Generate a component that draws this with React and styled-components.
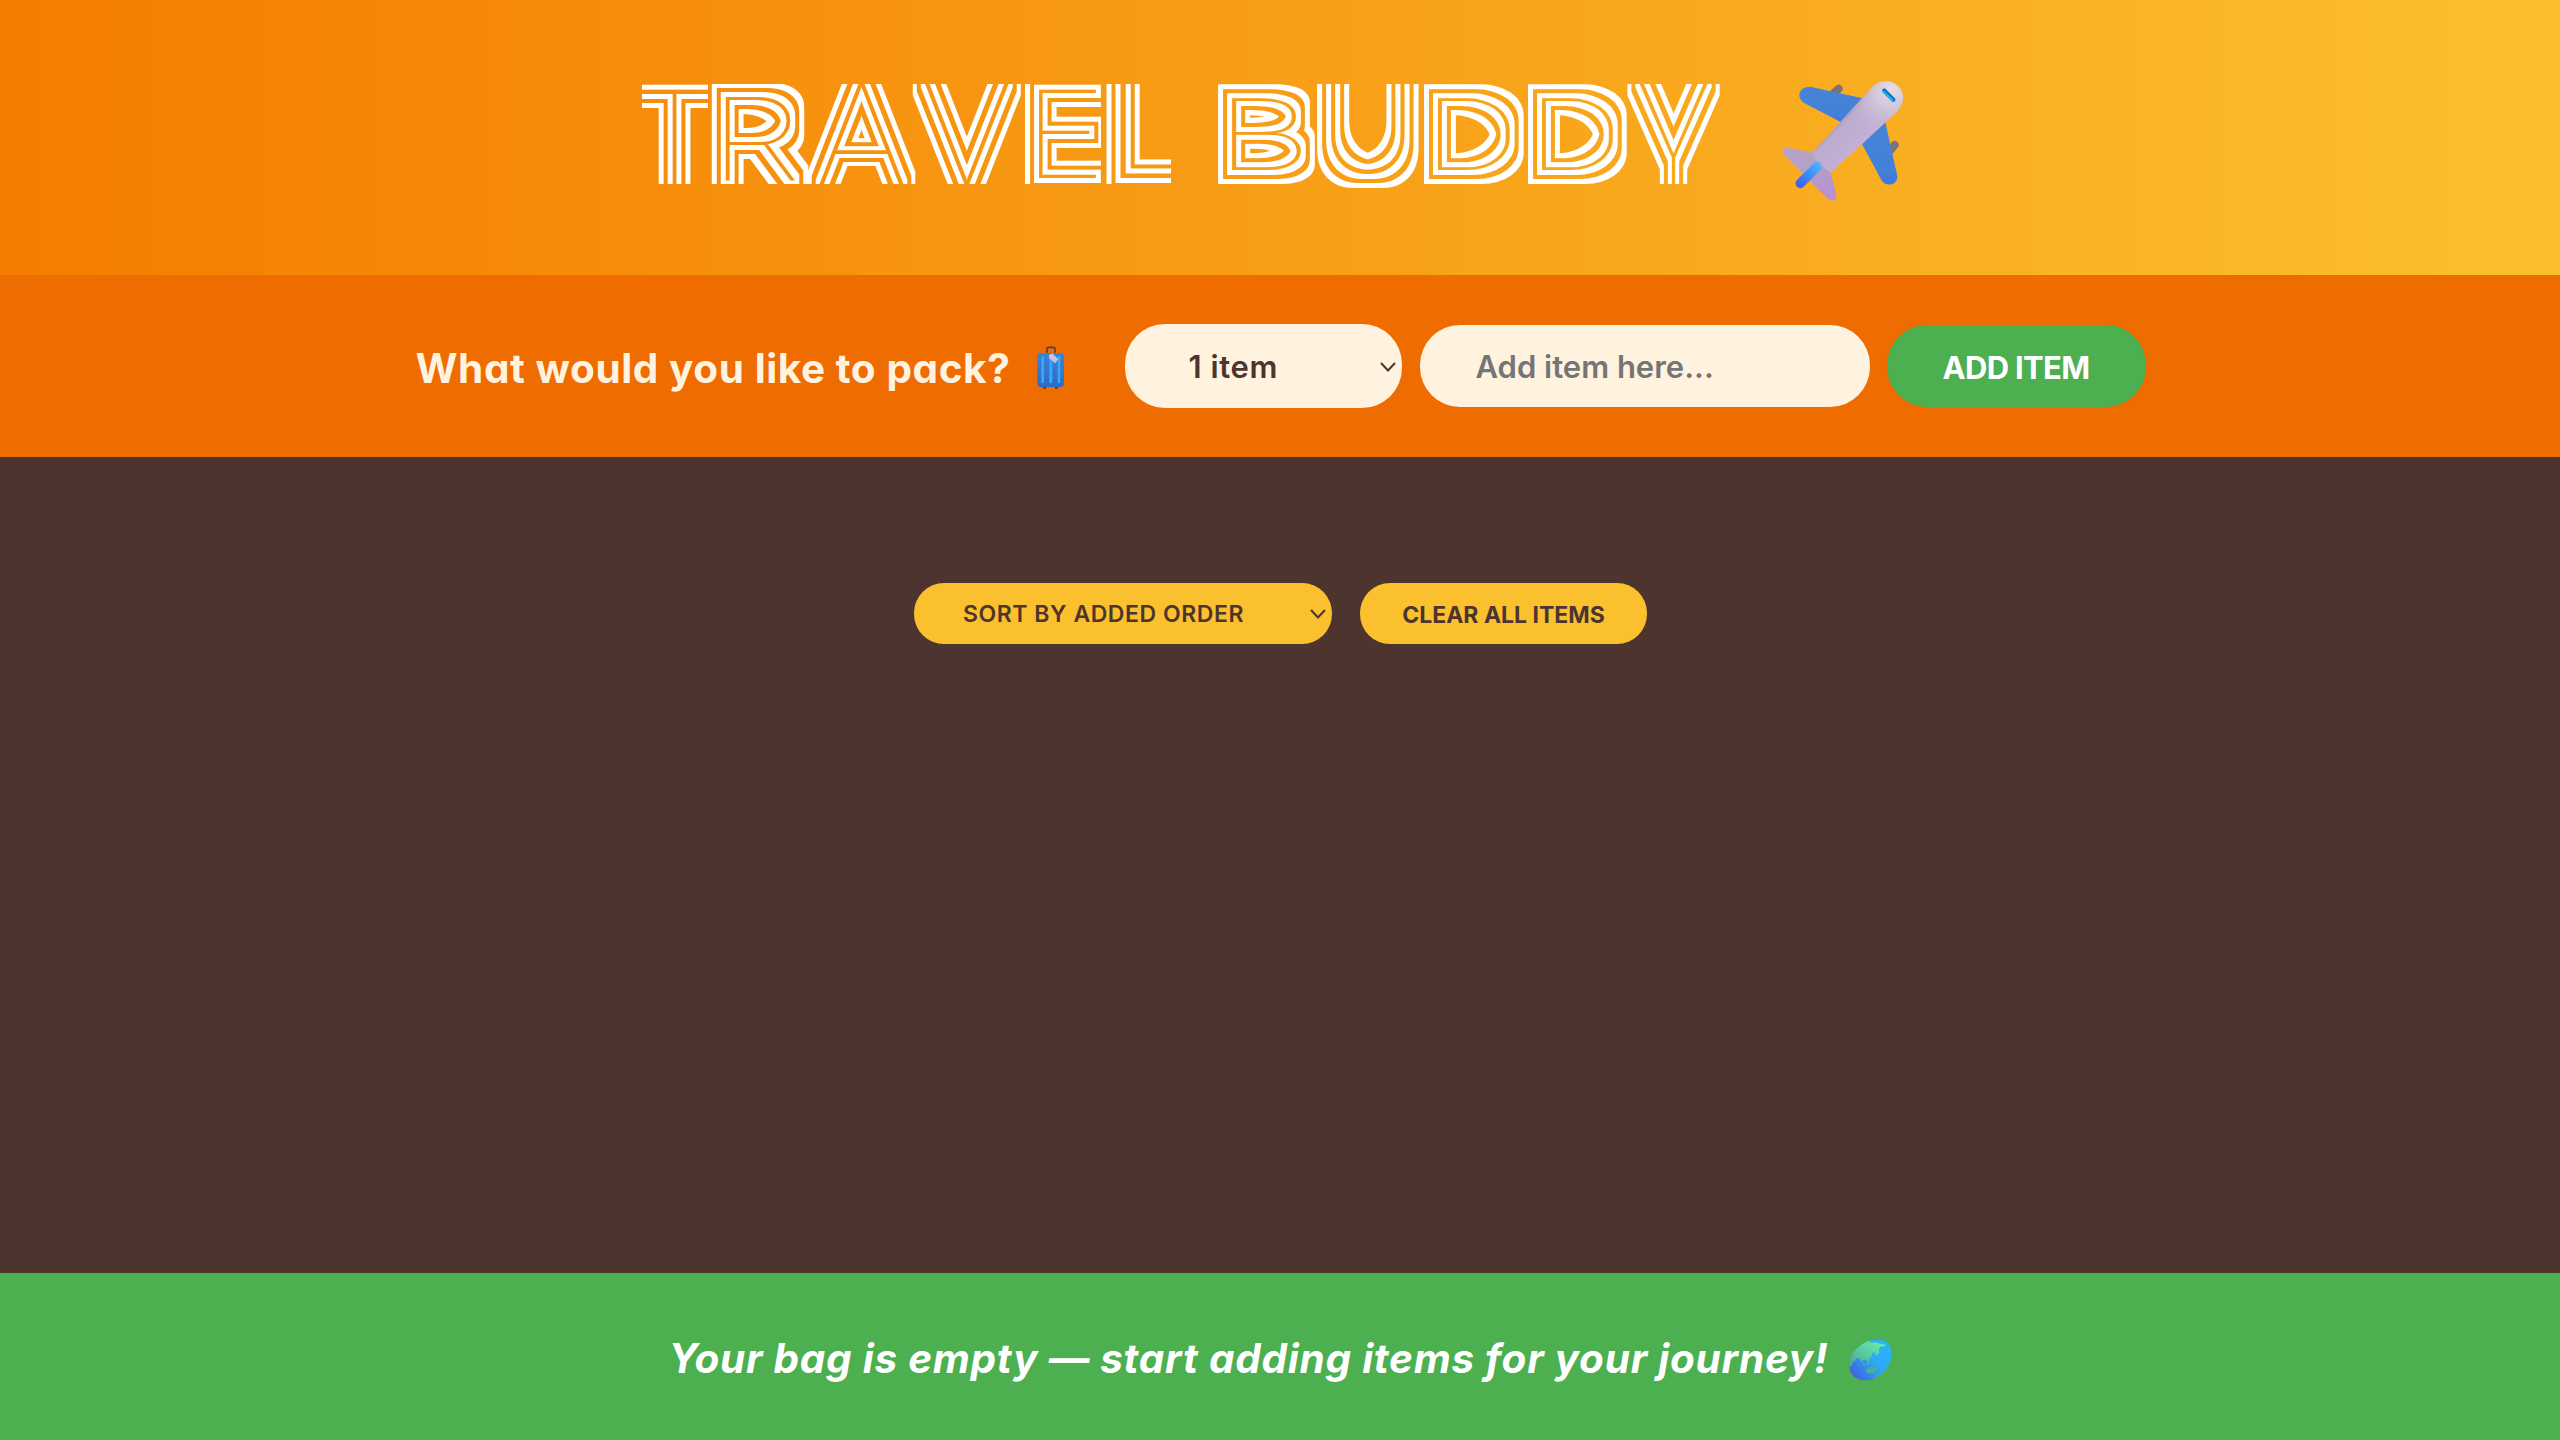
import React, { useMemo } from "react";
import styled, { createGlobalStyle } from "styled-components";

const GlobalStyle = createGlobalStyle`
  * { box-sizing: border-box; margin: 0; padding: 0; }
  body { margin: 0; overflow: hidden; }
`;

const FONT = `Inter, "Noto Sans", sans-serif`;

const Page = styled.div`
  width: 100%;
  height: 100vh;
  display: grid;
  grid-template-rows: 275px 182px 1fr 167px;
  font-family: ${FONT};
  font-feature-settings: "cv11", "ss03";
  font-weight: 700;
  color: #4e342e;
`;

const Header = styled.header`
  display: flex;
  justify-content: center;
  align-items: flex-start;
  padding: 80px 14px 0 0;
  background: linear-gradient(to right, #f57c00, #fbc02d);
`;

const Wordmark = styled.h1`
  height: 105px;
  padding-top: 4px;
  font: 100 100px/100px Roboto, sans-serif;
  color: #fff;
  white-space: pre;
`;

const Cell = styled.span`
  display: inline-block;
  vertical-align: top;
  width: ${(p) => p.$w}px;
  height: 100px;
  margin-left: ${(p) => p.$gap}px;
  filter: url(#${(p) => p.$filter});
  clip-path: inset(0 ${(p) => p.$side}px ${(p) => p.$bottom}px ${(p) => p.$side}px);
`;

const Glyph = styled.span`
  display: inline-block;
  vertical-align: top;
  transform-origin: 0 0;
  line-height: 100px;
`;

const Defs = styled.svg`
  position: absolute;
  width: 0;
  height: 0;
`;

const PlaneIcon = styled.svg`
  width: 122px;
  height: 122px;
  margin-left: 62px;
`;

/* l/r: outer edges of each letter; ink: box of the letter's centre line [x0, y0, x1, y1] */
const LETTERS = [
  { c: "T", l: 642, r: 708, ink: [636, 5, 713.4, 120], side: 0 },
  { c: "R", l: 711, r: 807, ink: [725, 14, 795, 98] },
  { c: "A", l: 806, r: 918, ink: [818.5, -1, 905, 102], thin: true },
  { c: "V", l: 911, r: 1023, ink: [923.5, -2, 1010.5, 101], thin: true },
  { c: "E", l: 1024, r: 1101, ink: [1038, 5, 1097, 95], side: 0 },
  { c: "L", l: 1105, r: 1171, ink: [1119, -30, 1195, 95], side: 0 },
  { c: " ", l: 1171, r: 1217 },
  { c: "B", l: 1217, r: 1315, ink: [1231, 14, 1301, 86] },
  { c: "U", l: 1317, r: 1419, ink: [1331, -30, 1405, 90.5], bottom: -8 },
  { c: "D", l: 1423, r: 1524, ink: [1437, 14, 1510, 86] },
  { c: "D", l: 1527, r: 1627, ink: [1541, 14, 1613, 86] },
  { c: "Y", l: 1626, r: 1720, ink: [1638.5, -2, 1708, 120], thin: true },
];

function fitLetters() {
  const ctx = document.createElement("canvas").getContext("2d");
  ctx.font = "100 100px Roboto, sans-serif";
  return LETTERS.map((d) => {
    if (!d.ink) return d;
    const m = ctx.measureText(d.c);
    const inkL = -m.actualBoundingBoxLeft;
    const inkW = m.actualBoundingBoxRight - inkL;
    const inkH = m.actualBoundingBoxAscent + m.actualBoundingBoxDescent;
    const base = 50 + (m.fontBoundingBoxAscent - m.fontBoundingBoxDescent) / 2;
    const [x0, y0, x1, y1] = d.ink;
    const sx = (x1 - x0) / inkW;
    const sy = (y1 - y0) / inkH;
    const tx = x0 - d.l - inkL * sx;
    const ty = y0 - (base - m.actualBoundingBoxAscent) * sy;
    return { ...d, transform: `translate(${tx}px, ${ty}px) scale(${sx}, ${sy})` };
  });
}

function LineFilter({ id, radii }) {
  const [a, b, c] = radii;
  return (
    <filter id={id} filterUnits="userSpaceOnUse" x="-60" y="-60" width="260" height="240" colorInterpolationFilters="sRGB">
      <feMorphology in="SourceGraphic" operator="dilate" radius={a} result="a" />
      <feMorphology in="SourceGraphic" operator="dilate" radius={b} result="b" />
      <feMorphology in="SourceGraphic" operator="dilate" radius={c} result="c" />
      <feComposite in="c" in2="b" operator="out" result="outer" />
      <feComposite in="a" in2="SourceGraphic" operator="out" result="inner" />
      <feMerge>
        <feMergeNode in="outer" />
        <feMergeNode in="inner" />
      </feMerge>
    </filter>
  );
}

function Title() {
  const letters = useMemo(fitLetters, []);
  return (
    <Wordmark aria-label="TRAVEL BUDDY">
      {letters.map((d, i) => (
        <Cell
          key={i}
          $w={d.r - d.l}
          $gap={i ? d.l - letters[i - 1].r : 0}
          $filter={d.thin ? "lines-diagonal" : "lines"}
          $side={d.side === 0 ? 0 : -10}
          $bottom={d.bottom || 0}
        >
          <Glyph style={{ transform: d.transform }}>{d.c}</Glyph>
        </Cell>
      ))}
    </Wordmark>
  );
}

function Plane() {
  return (
    <PlaneIcon viewBox="68 58 366 366">
      <defs>
        <linearGradient id="pBody" gradientUnits="userSpaceOnUse" x1="225" y1="175" x2="300" y2="250">
          <stop offset="0" stopColor="#9a8ba8" />
          <stop offset=".3" stopColor="#bcabcf" />
          <stop offset="1" stopColor="#c2b0d6" />
        </linearGradient>
        <radialGradient id="pNose" gradientUnits="userSpaceOnUse" cx="395" cy="85" r="150">
          <stop offset="0" stopColor="#e6dfe6" />
          <stop offset=".4" stopColor="#d4c8d8" stopOpacity=".85" />
          <stop offset="1" stopColor="#c2b0d0" stopOpacity="0" />
        </radialGradient>
        <linearGradient id="pFin" gradientUnits="userSpaceOnUse" x1="178" y1="312" x2="118" y2="374">
          <stop offset="0" stopColor="#4cb4ff" />
          <stop offset=".5" stopColor="#3c8cf8" />
          <stop offset="1" stopColor="#4060f0" />
        </linearGradient>
        <linearGradient id="pTail" x1="0" y1="0" x2=".6" y2="1">
          <stop offset="0" stopColor="#b9a3c6" />
          <stop offset=".5" stopColor="#b3a2c6" />
          <stop offset="1" stopColor="#b892d0" />
        </linearGradient>
        <linearGradient id="pWing" x1="0" y1="0" x2="0" y2="1">
          <stop offset="0" stopColor="#4683d8" />
          <stop offset=".8" stopColor="#4381da" />
          <stop offset="1" stopColor="#3f74dc" />
        </linearGradient>
      </defs>
      <path d="M224 96 L238 84" stroke="#7b7377" strokeWidth="24" strokeLinecap="round" />
      <path d="M394 268 L406 253" stroke="#7b7377" strokeWidth="24" strokeLinecap="round" />
      <path d="M152 78 L310 113 L244 184 L133 126 Q119 117 120 100 Q124 79 152 78Z" fill="url(#pWing)" />
      <path d="M378 184 L414 346 Q415 366 396 371 Q377 375 366 358 L308 250Z" fill="url(#pWing)" />
      <path d="M88 261 L160 276 L214 336 L231 402 Q232 418 218 420 Q209 420 202 411 L73 281 Q66 274 72 265 Q78 259 88 261Z" fill="url(#pTail)" />
      <path d="M342 75 Q370 54 402 66 Q426 78 431 104 Q433 130 412 154 L214 336 Q180 316 157 278Z" fill="url(#pBody)" />
      <path d="M342 75 Q370 54 402 66 Q426 78 431 104 Q433 130 412 154 L214 336 Q180 316 157 278Z" fill="url(#pNose)" />
      <path d="M123 368 L173 318" stroke="url(#pFin)" strokeWidth="29" strokeLinecap="round" />
      <path d="M375 90 L402 117" stroke="#0f77c0" strokeWidth="13" strokeLinecap="round" />
      <path d="M373 94 L399 119" stroke="#19b2f8" strokeWidth="7" strokeLinecap="round" />
    </PlaneIcon>
  );
}

const FormBar = styled.form`
  display: flex;
  justify-content: center;
  align-items: center;
  padding-left: 1px;
  background: #ef6c00;
`;

const Prompt = styled.h3`
  width: 595px;
  font-size: 40.5px;
  font-weight: 650;
  letter-spacing: ${(p) => p.$track}px;
  line-height: 52px;
  white-space: nowrap;
  color: #fff3e0;
  padding-top: 5px;
`;

const BagIcon = styled.svg`
  width: 28px;
  height: 44px;
  margin: 3px 60px 0 26px;
`;

const SelectBox = styled.div`
  position: relative;
  display: flex;
  width: ${(p) => p.$w}px;
  height: ${(p) => p.$h}px;
  margin-right: ${(p) => p.$mr}px;
`;

const Select = styled.select`
  appearance: none;
  width: 100%;
  border: 0;
  outline: 0;
  border-radius: ${(p) => p.$radius}px;
  background: ${(p) => p.$bg};
  color: #4e342e;
  padding: 1px 0 0 ${(p) => p.$pl}px;
  font: 600 ${(p) => p.$size}px ${FONT};
  font-feature-settings: "cv11";
  letter-spacing: ${(p) => p.$track}px;
`;

const Chevron = styled.svg`
  position: absolute;
  right: ${(p) => p.$right}px;
  top: ${(p) => p.$top}px;
  width: 16px;
  height: 10px;
  fill: none;
  stroke: #4e342e;
  stroke-width: 2;
  pointer-events: none;
`;

const Input = styled.input`
  width: 450px;
  height: 82px;
  margin-right: 17px;
  padding: 1px 0 0 56px;
  border: 0;
  outline: 0;
  border-radius: 40px;
  background: #fff3e0;
  font: 600 31px ${FONT};
  letter-spacing: 0;
  color: #4e342e;
  &::placeholder { color: #757575; opacity: 1; }
`;

const Button = styled.button`
  width: ${(p) => p.$w}px;
  height: ${(p) => p.$h}px;
  padding-top: 2px;
  border: 0;
  border-radius: ${(p) => p.$radius}px;
  background: ${(p) => p.$bg};
  color: ${(p) => p.$color};
  font: 650 ${(p) => p.$size}px ${FONT};
  letter-spacing: ${(p) => p.$track}px;
  white-space: nowrap;
`;

function Suitcase() {
  return (
    <BagIcon viewBox="0 0 84 132">
      <defs>
        <linearGradient id="sBody" x1="0" y1="0" x2="0" y2="1">
          <stop offset="0" stopColor="#3c84d8" />
          <stop offset="1" stopColor="#2d68c8" />
        </linearGradient>
      </defs>
      <path d="M30 20 V8 Q30 4 35 4 H49 Q54 4 54 8 V20" fill="none" stroke="#5a3b52" strokeWidth="5" />
      <rect x="19" y="120" width="8" height="8" fill="#4f2f50" />
      <rect x="54" y="120" width="8" height="8" fill="#4f2f50" />
      <rect x="1" y="21" width="80" height="102" rx="11" fill="url(#sBody)" />
      <rect x="13" y="30" width="8" height="82" rx="4" fill="#35aaf2" />
      <rect x="37" y="30" width="9" height="82" rx="4" fill="#35aaf2" />
      <rect x="62" y="30" width="8" height="82" rx="4" fill="#35aaf2" />
      <path d="M36 27 L46 22 L64 40 L54 52 L36 36Z" fill="#c9c0da" />
    </BagIcon>
  );
}

const List = styled.main`
  display: flex;
  justify-content: center;
  align-items: flex-start;
  padding: 126px 0 0 1px;
  background: #4e342e;
`;

const Footer = styled.footer`
  display: flex;
  justify-content: center;
  align-items: center;
  background: #4caf50;
  color: #fff;
`;

const Stats = styled.em`
  width: 1163px;
  font-size: 40.5px;
  font-weight: 650;
  font-style: oblique 14deg;
  line-height: 52px;
  letter-spacing: ${(p) => p.$track}px;
  white-space: nowrap;
  padding-top: 5px;
`;

const GlobeIcon = styled.svg`
  width: 43px;
  height: 42px;
  margin: 6px 0 0 17px;
`;

function Globe() {
  return (
    <GlobeIcon viewBox="42 40 130 126">
      <defs>
        <linearGradient id="gSea" x1="1" y1=".2" x2=".1" y2=".9">
          <stop offset="0" stopColor="#2cb4f8" />
          <stop offset=".45" stopColor="#2fa8fa" />
          <stop offset="1" stopColor="#3f62d8" />
        </linearGradient>
        <linearGradient id="gLand" x1="1" y1="0" x2="0" y2="1">
          <stop offset="0" stopColor="#6cf7a8" />
          <stop offset="1" stopColor="#4aa49a" />
        </linearGradient>
        <clipPath id="gClip">
          <path d="M128 41 C158 41 174 62 170 90 C166 128 132 165 92 165 C60 165 42 146 43 116 C45 76 88 41 128 41Z" />
        </clipPath>
      </defs>
      <g clipPath="url(#gClip)">
        <rect x="40" y="38" width="134" height="130" fill="url(#gSea)" />
        <path d="M40 40 H104 L106 50 L126 50 L134 54 L154 57 L148 62 H138 L132 70 L134 82 L122 90 L120 80 L112 82 L110 92 L104 98 L102 106 L96 108 L92 100 L84 104 L80 110 L74 100 L66 96 L60 106 L52 108 L52 120 L40 124Z" fill="url(#gLand)" />
        <path d="M84 112 L90 114 L90 120 L84 118Z M97 108 L103 106 V118 L96 118Z M114 108 L120 106 L124 118 L116 120Z" fill="#46b4a4" />
        <path d="M96 130 L108 124 L124 126 L126 134 L118 142 L98 142 L94 138Z" fill="#45b09c" />
        <path d="M134 138 L137 141 L124 156 L120 153Z" fill="#45b09c" />
      </g>
    </GlobeIcon>
  );
}

export default function App() {
  return (
    <Page>
      <GlobalStyle />
      <Defs aria-hidden="true">
        <LineFilter id="lines" radii={[5, 9, 14]} />
        <LineFilter id="lines-diagonal" radii={[4, 8, 12]} />
      </Defs>
      <Header>
        <Title />
        <Plane />
      </Header>
      <FormBar onSubmit={(e) => e.preventDefault()}>
        <Prompt $track={0.58}>What would you like to pack?</Prompt>
        <Suitcase />
        <SelectBox $w={277} $h={84} $mr={18}>
          <Select $radius={40} $bg="#fff3e0" $pl={64} $size={31} $track={0.6}>
            <option>1 item</option>
          </Select>
          <Chevron $right={6} $top={38} viewBox="0 0 16 10"><path d="M1 1 L8 8.5 L15 1" /></Chevron>
        </SelectBox>
        <Input placeholder="Add item here..." />
        <Button $w={259} $h={82} $radius={40} $bg="#4caf50" $color="#fff" $size={31} $track={-0.7}>ADD ITEM</Button>
      </FormBar>
      <List>
        <SelectBox $w={418} $h={61} $mr={28}>
          <Select $radius={30} $bg="#fbc02d" $pl={49} $size={23} $track={0.55}>
            <option>SORT BY ADDED ORDER</option>
          </Select>
          <Chevron $right={6} $top={26} viewBox="0 0 16 10"><path d="M1 1 L8 8.5 L15 1" /></Chevron>
        </SelectBox>
        <Button $w={287} $h={61} $radius={30} $bg="#fbc02d" $color="#4e342e" $size={23} $track={0}>CLEAR ALL ITEMS</Button>
      </List>
      <Footer>
        <Stats $track={0.73}>Your bag is empty — start adding items for your journey!</Stats>
        <Globe />
      </Footer>
    </Page>
  );
}
